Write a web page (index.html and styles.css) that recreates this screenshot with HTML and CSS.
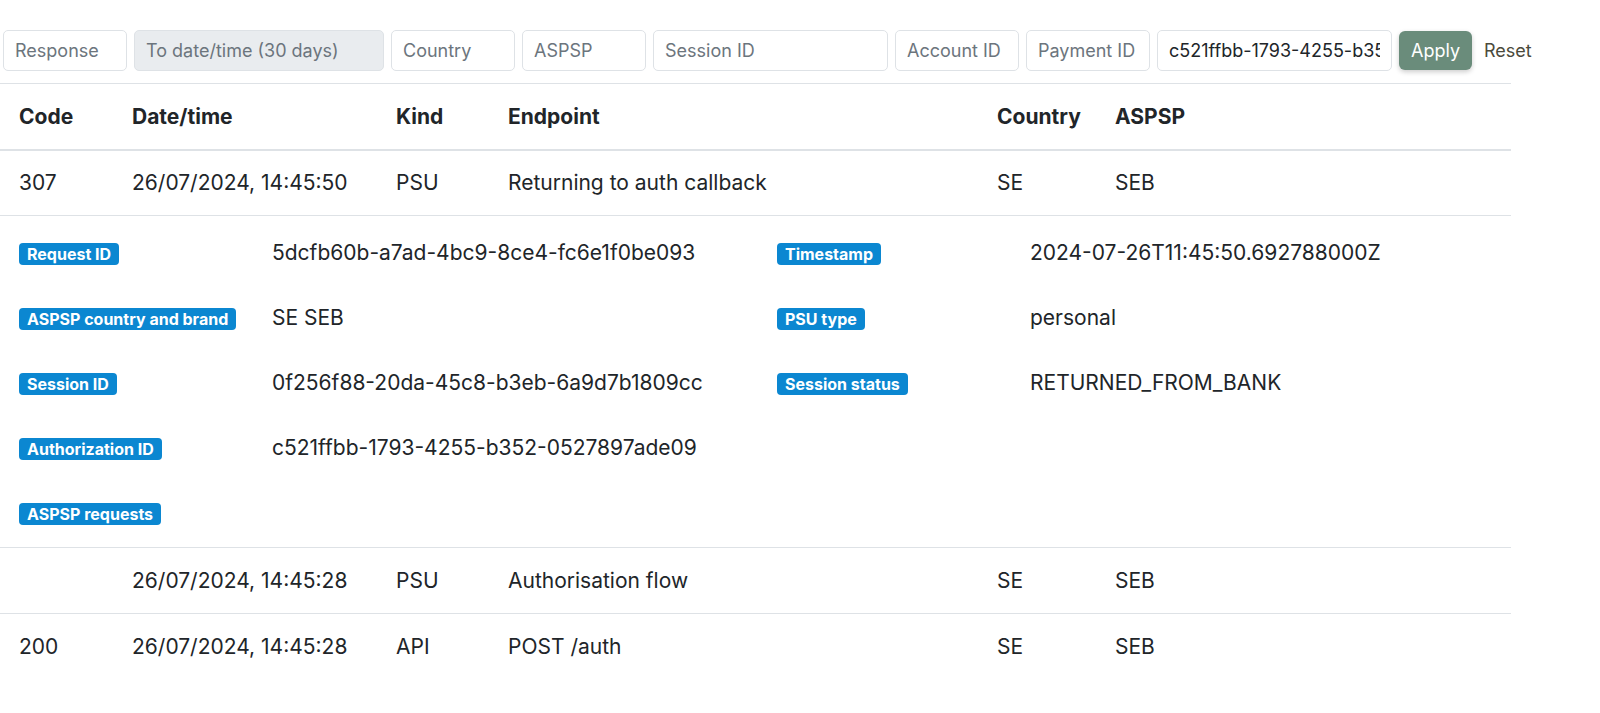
FILE: index.html
```html
<!DOCTYPE html>
<html lang="en">
<head>
  <meta charset="UTF-8" />
  <meta name="viewport" content="width=device-width, initial-scale=1" />
  <title>Request log</title>
  <link rel="stylesheet" href="styles.css">
</head>
<body>
  <form class="filters">
    <input type="text" class="field" placeholder="Response" />
    <input type="text" class="field field-date" placeholder="To date/time (30 days)" disabled />
    <input type="text" class="field" placeholder="Country" />
    <input type="text" class="field" placeholder="ASPSP" />
    <input type="text" class="field field-wide" placeholder="Session ID" />
    <input type="text" class="field" placeholder="Account ID" />
    <input type="text" class="field" placeholder="Payment ID" />
    <input type="text" class="field field-wide" value="c521ffbb-1793-4255-b352-0527897ade09" />
    <button type="submit" class="btn-apply">Apply</button>
    <button type="reset" class="btn-reset">Reset</button>
  </form>

  <table class="log">
    <colgroup>
      <col class="col-code" />
      <col class="col-date" />
      <col class="col-kind" />
      <col class="col-endpoint" />
      <col class="col-country" />
      <col />
    </colgroup>
    <thead>
      <tr>
        <th>Code</th>
        <th>Date/time</th>
        <th>Kind</th>
        <th>Endpoint</th>
        <th>Country</th>
        <th>ASPSP</th>
      </tr>
    </thead>
    <tbody>
      <tr>
        <td>307</td>
        <td>26/07/2024, 14:45:50</td>
        <td>PSU</td>
        <td>Returning to auth callback</td>
        <td>SE</td>
        <td>SEB</td>
      </tr>
      <tr class="details-row">
        <td colspan="6">
          <div class="details">
            <div class="item"><span class="badge">Request ID</span></div>
            <div class="item">5dcfb60b-a7ad-4bc9-8ce4-fc6e1f0be093</div>
            <div class="item"><span class="badge">Timestamp</span></div>
            <div class="item">2024-07-26T11:45:50.692788000Z</div>

            <div class="item"><span class="badge">ASPSP country and brand</span></div>
            <div class="item">SE SEB</div>
            <div class="item"><span class="badge">PSU type</span></div>
            <div class="item">personal</div>

            <div class="item"><span class="badge">Session ID</span></div>
            <div class="item">0f256f88-20da-45c8-b3eb-6a9d7b1809cc</div>
            <div class="item"><span class="badge">Session status</span></div>
            <div class="item">RETURNED_FROM_BANK</div>

            <div class="item"><span class="badge">Authorization ID</span></div>
            <div class="item">c521ffbb-1793-4255-b352-0527897ade09</div>
            <div class="item"></div>
            <div class="item"></div>

            <div class="item"><span class="badge">ASPSP requests</span></div>
          </div>
        </td>
      </tr>
      <tr>
        <td></td>
        <td>26/07/2024, 14:45:28</td>
        <td>PSU</td>
        <td>Authorisation flow</td>
        <td>SE</td>
        <td>SEB</td>
      </tr>
      <tr class="last">
        <td>200</td>
        <td>26/07/2024, 14:45:28</td>
        <td>API</td>
        <td>POST /auth</td>
        <td>SE</td>
        <td>SEB</td>
      </tr>
    </tbody>
  </table>
</body>
</html>
```

FILE: styles.css
```css
body {
  margin: 0;
  font-family: Inter, "Noto Sans", sans-serif;
  font-size: 21px;
  color: #212529;
  background: #fff;
}

.filters {
  display: flex;
  align-items: center;
  gap: 7px;
  padding: 30px 0 0 3px;
  margin-bottom: 12px;
}
.field {
  width: 124px;
  height: 41px;
  box-sizing: border-box;
  padding: 0 11px;
  border: 1px solid #dee2e6;
  border-radius: 5px;
  font-family: inherit;
  font-size: 18px;
  color: #212529;
  background: #fff;
}
.field::placeholder {
  color: #6c757d;
}
.field-date {
  width: 250px;
  background: #e9ecef;
}
.field-wide {
  width: 235px;
}
.btn-apply {
  height: 39px;
  padding: 0 12px;
  border: none;
  border-radius: 6px;
  background: #6a8c7b;
  color: #fff;
  font-family: inherit;
  font-size: 18px;
  box-shadow: 0 2px 5px rgba(0,0,0,0.2);
  cursor: pointer;
}
.btn-reset {
  border: none;
  background: none;
  padding: 0 5px;
  font-family: inherit;
  font-size: 18px;
  color: #4b4a3c;
  cursor: pointer;
}

.log {
  width: 1511px;
  table-layout: fixed;
  border-collapse: collapse;
  border-top: 1px solid #dee2e6;
}
.col-code { width: 113px; }
.col-date { width: 264px; }
.col-kind { width: 112px; }
.col-endpoint { width: 489px; }
.col-country { width: 118px; }

.log th,
.log td {
  height: 66px;
  padding: 0 19px;
  text-align: left;
  vertical-align: middle;
  white-space: nowrap;
  border-bottom: 1px solid #dee2e6;
  box-sizing: border-box;
}
.log th {
  font-weight: 700;
  border-bottom: 2px solid #dee2e6;
}
.log tr.last td {
  border-bottom: none;
}

.details-row td {
  height: auto;
  padding: 4px 19px 2px;
}
.details {
  display: grid;
  grid-template-columns: 253px 505px 253px 1fr;
  grid-auto-rows: 65px;
  align-items: center;
}
.badge {
  display: inline-block;
  padding: 3px 8px;
  border-radius: 4px;
  background: #0b87d1;
  color: #fff;
  font-size: 16px;
  font-weight: 700;
  line-height: 16px;
}
```
